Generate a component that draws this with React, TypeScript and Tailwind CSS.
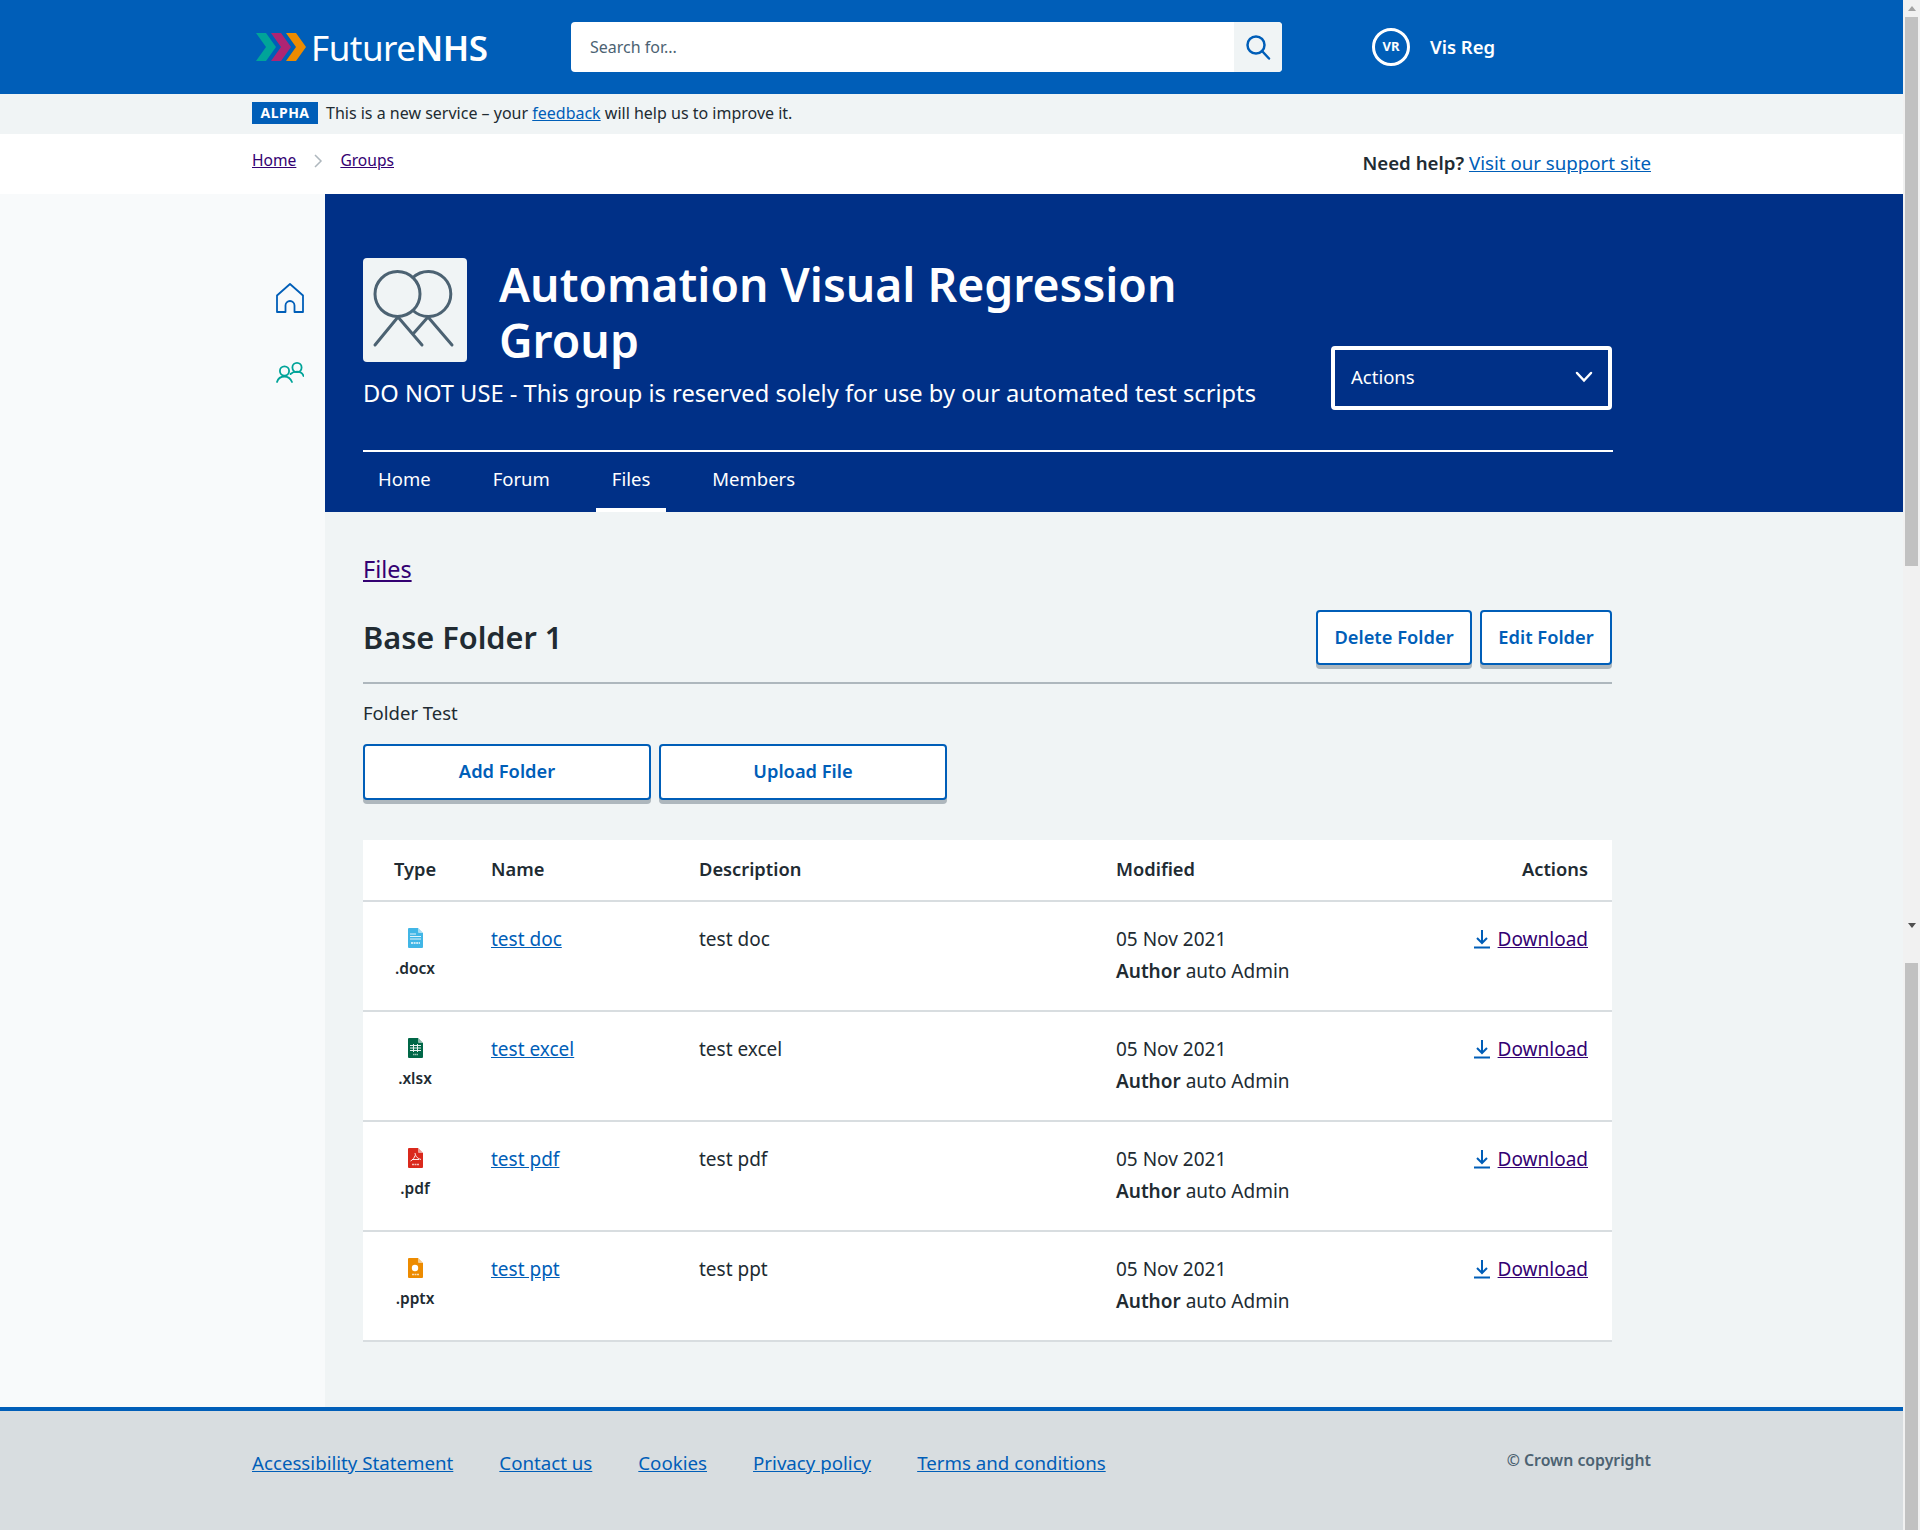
import { ReactNode } from 'react';

const FILES = [
    { name: 'test doc', ext: '.docx', icon: 'doc' },
    { name: 'test excel', ext: '.xlsx', icon: 'xls' },
    { name: 'test pdf', ext: '.pdf', icon: 'pdf' },
    { name: 'test ppt', ext: '.pptx', icon: 'ppt' },
];

const FOOTER_LINKS = ['Accessibility Statement', 'Contact us', 'Cookies', 'Privacy policy', 'Terms and conditions'];

const SHEET = 'M2 0h9l5 5v14a1 1 0 0 1-1 1H2a1 1 0 0 1-1-1V1a1 1 0 0 1 1-1z';

function FileIcon({ type }: { type: string }) {
    const fill: Record<string, string> = { doc: '#41b6e6', xls: '#006747', pdf: '#da291c', ppt: '#ed8b00' };
    return (
        <svg width="17" height="20" viewBox="0 0 17 20" className="block">
            <path d={SHEET} fill={fill[type]} />
            <path d="M11 0l5 5h-4a1 1 0 0 1-1-1z" fill="#fff" opacity="0.55" />
            {type === 'doc' && <path d="M3 6h6M3 8.5h11M3 11h11" stroke="#fff" strokeWidth="1" opacity="0.85" />}
            {type === 'doc' && <path d="M4 15h9" stroke="#fff" strokeWidth="2" strokeDasharray="2 .6" opacity="0.7" />}
            {type === 'xls' && <path d="M3 7.5h11M3 10h11M3 12.5h11M6.5 6v8M10.5 6v8" stroke="#fff" strokeWidth="1" opacity="0.9" />}
            {type === 'xls' && <path d="M6 16.5h5" stroke="#fff" strokeWidth="1.5" strokeDasharray="1.4 .4" opacity="0.6" />}
            {type === 'pdf' && <path d="M8 5c.5 3 1.500 5 6 6.500M8 7.500c-.5 2-2 4.500-4.500 5.500M5 11.500h7" stroke="#fff" strokeWidth="1" fill="none" opacity="0.9" />}
            {type === 'pdf' && <path d="M5 16.500h7" stroke="#fff" strokeWidth="1.500" strokeDasharray="2 .5" opacity="0.7" />}
            {type === 'ppt' && <circle cx="8" cy="10" r="3.200" fill="#fff" />}
            {type === 'ppt' && <path d="M8 10V6.800h3.200a3.200 3.200 0 0 0-3.200-0z" fill={fill.ppt} />}
            {type === 'ppt' && <path d="M5 16.500h7" stroke="#fff" strokeWidth="1.500" strokeDasharray="2 .5" opacity="0.7" />}
        </svg>
    );
}

function OutlineButton({ className, children }: { className: string; children: ReactNode }) {
    return (
        <button className={`flex items-center justify-center rounded-[4px] border-[2px] border-[#005eb8] bg-white pb-[2px] text-[18.300px] font-semibold text-[#005eb8] shadow-[0_4px_0_#aeb7bd] ${className}`}>
            {children}
        </button>
    );
}

export default function App() {
    return (
        <div className="flex h-[1530px] w-[1920px] overflow-hidden bg-[#f0f4f5] font-['Noto_Sans',sans-serif] text-[#212b32]">
            <div className="flex w-[1903px] flex-col">
                {/* Top bar */}
                <header className="flex h-[94px] items-center bg-[#005eb8] pl-[256px]">
                    <div className="flex w-[315px] items-center">
                        <svg width="51" height="28" viewBox="0 0 51 28" className="mr-[4px]">
                            <path d="M0 0h10l10 14-10 14H0l10-14z" fill="#00a499" />
                            <path d="M15 0h10l10 14-10 14H15l10-14z" fill="#ae2573" />
                            <path d="M30 0h10l10 14-10 14H30l10-14z" fill="#ed8b00" />
                        </svg>
                        <span className="text-[35px] leading-none tracking-[-0.5px] text-white">Future<span className="font-semibold">NHS</span></span>
                    </div>
                    <div className="flex h-[50px] w-[711px] overflow-hidden rounded-[4px] bg-white">
                        <span className="flex flex-1 items-center pl-[19px] text-[16px] text-[#4c6272]">Search for...</span>
                        <span className="flex w-[48px] items-center justify-center bg-[#f0f4f5]">
                            <svg width="26" height="26" viewBox="0 0 26 26" fill="none" stroke="#005eb8" strokeWidth="2.500" strokeLinecap="round">
                                <circle cx="11" cy="11" r="8.500" />
                                <path d="M17 17l7 7.500" />
                            </svg>
                        </span>
                    </div>
                    <span className="ml-[90px] flex h-[38px] w-[38px] items-center justify-center rounded-full border-[3px] border-white text-[13px] font-bold text-white">VR</span>
                    <span className="ml-[20px] text-[18.500px] font-semibold text-white">Vis Reg</span>
                </header>

                {/* Alpha banner */}
                <div className="flex h-[40px] items-center pb-[2px] pl-[252px] text-[16px]">
                    <span className="mr-[8px] flex h-[22px] w-[66px] items-center justify-center bg-[#005eb8] pb-[2px] text-[14px] font-bold tracking-[0.5px] text-white">ALPHA</span>
                    <span>This is a new service – your <a className="text-[#005eb8] underline">feedback</a> will help us to improve it.</span>
                </div>

                {/* Breadcrumb */}
                <div className="flex h-[60px] justify-between bg-white px-[252px]">
                    <nav className="flex h-[54px] items-center text-[15.600px] text-[#330072]">
                        <a className="underline">Home</a>
                        <svg width="10" height="14" viewBox="0 0 10 14" fill="none" stroke="#aeb7bd" strokeWidth="1.500" className="mx-[17px]">
                            <path d="M2 1l6 6-6 6" />
                        </svg>
                        <a className="underline">Groups</a>
                    </nav>
                    <p className="mt-[17px] text-[18.700px] leading-[24px]">
                        <span className="font-semibold">Need help?</span> <a className="text-[#005eb8] underline">Visit our support site</a>
                    </p>
                </div>

                <div className="flex h-[1213px]">
                    {/* Side nav */}
                    <aside className="flex w-[325px] flex-col items-end bg-[#f8fafb] pr-[21px] pt-[89px]">
                        <svg width="28" height="30" viewBox="0 0 28 30" fill="none" stroke="#005eb8" strokeWidth="1.800">
                            <path d="M1 29V12.500L14 1l13 11.500V29h-8.500v-6.500a4.500 4.500 0 0 0-9 0V29z" strokeLinejoin="round" />
                        </svg>
                        <svg width="28" height="21" viewBox="0 0 28 21" fill="none" stroke="#00a499" strokeWidth="1.800" strokeLinecap="round" className="mt-[49px]">
                            <circle cx="8.500" cy="9" r="4.600" />
                            <circle cx="21" cy="5.500" r="4.600" />
                            <path d="M1 20c1-3.500 4-5.500 7.500-5.500s6 2 7.500 5.500M14.500 12c2-2 4-2.300 6.500-2.300 3 0 5.500 1.500 6.500 4.300" />
                        </svg>
                    </aside>

                    <main className="flex-1">
                        {/* Group hero */}
                        <section className="h-[318px] bg-[#003087] pl-[38px] pr-[290px] pt-[64px] text-white">
                            <div className="flex h-[194px] justify-between border-b-[2px] border-white">
                                <div>
                                    <div className="flex">
                                        <svg width="104" height="104" viewBox="0 0 104 104" fill="none" stroke="#4c6272" strokeWidth="3" strokeLinecap="round" className="rounded-[4px] bg-[#f0f4f5]">
                                            <circle cx="34.500" cy="36" r="22.500" />
                                            <path d="M50 19.500A22.500 22.500 0 1 1 50 52.500" />
                                            <path d="M35 59L12 87M35 59l24 28M65 59L50 76M65 59l24 28" />
                                        </svg>
                                        <h1 className="-mt-[1px] ml-[32px] w-[720px] text-[46.300px] font-semibold leading-[56px]">Automation Visual Regression Group</h1>
                                    </div>
                                    <p className="mt-[8px] text-[23.700px] leading-[32px]">DO NOT USE - This group is reserved solely for use by our automated test scripts</p>
                                </div>
                                <div className="mr-[1px] mt-[88px] flex h-[64px] w-[281px] items-center justify-between rounded-[4px] border-[4px] border-white pb-[2px] pl-[16px] pr-[15px] text-[18.500px]">
                                    <span>Actions</span>
                                    <svg width="18" height="12" viewBox="0 0 18 12" fill="none" stroke="#fff" strokeWidth="2.500" strokeLinecap="round">
                                        <path d="M2 2l7 7.500L16 2" />
                                    </svg>
                                </div>
                            </div>
                            <nav className="-ml-[1px] flex h-[60px] gap-[30px] text-[18.500px]">
                                {['Home', 'Forum', 'Files', 'Members'].map(tab => (
                                    <a key={tab} className={`flex items-center border-b-[4px] px-[16px] pb-[2px] ${tab === 'Files' ? 'border-white' : 'border-transparent'}`}>{tab}</a>
                                ))}
                            </nav>
                        </section>

                        {/* Files */}
                        <section className="pl-[38px] pr-[291px] pt-[39px]">
                            <a className="block text-[23.400px] leading-[36px] text-[#330072] underline">Files</a>
                            <div className="mt-[19px] flex items-center justify-between border-b-[2px] border-[#aeb7bd] pb-[17px] pt-[4px]">
                                <h2 className="pb-[2px] text-[30.700px] font-semibold leading-[40px]">Base Folder 1</h2>
                                <div className="flex gap-[8px]">
                                    <OutlineButton className="h-[55px] w-[156px]">Delete Folder</OutlineButton>
                                    <OutlineButton className="h-[55px] w-[132px]">Edit Folder</OutlineButton>
                                </div>
                            </div>
                            <p className="mt-[17px] text-[18.500px] leading-[24px]">Folder Test</p>
                            <div className="mt-[19px] flex gap-[8px]">
                                <OutlineButton className="h-[56px] w-[288px]">Add Folder</OutlineButton>
                                <OutlineButton className="h-[56px] w-[288px]">Upload File</OutlineButton>
                            </div>

                            <table className="mt-[40px] w-full table-fixed bg-white text-left text-[19px]">
                                <thead>
                                    <tr className="h-[61px] border-b-[2px] border-[#d8dde0] text-[18.300px]">
                                        <th className="w-[128px] pb-[2px] pl-[31px] font-semibold">Type</th>
                                        <th className="w-[208px] pb-[2px] font-semibold">Name</th>
                                        <th className="w-[417px] pb-[2px] font-semibold">Description</th>
                                        <th className="pb-[2px] font-semibold">Modified</th>
                                        <th className="w-[200px] pb-[2px] pr-[24px] text-right font-semibold">Actions</th>
                                    </tr>
                                </thead>
                                <tbody>
                                    {FILES.map(file => (
                                        <tr key={file.name} className="h-[110px] border-b-[2px] border-[#d8dde0] align-top">
                                            <td>
                                                <div className="flex w-[104px] flex-col items-center pt-[26px]">
                                                    <FileIcon type={file.icon} />
                                                    <span className="mt-[8px] text-[15.500px] font-semibold leading-[24px]">{file.ext}</span>
                                                </div>
                                            </td>
                                            <td className="pt-[21px] leading-[32px]"><a className="text-[#005eb8] underline">{file.name}</a></td>
                                            <td className="pt-[21px] leading-[32px]">{file.name}</td>
                                            <td className="pt-[21px] leading-[32px]">
                                                <div>05 Nov 2021</div>
                                                <div><span className="font-semibold">Author</span> auto Admin</div>
                                            </td>
                                            <td className="pr-[24px] pt-[21px] leading-[32px]">
                                                <div className="flex items-center justify-end">
                                                    <svg width="16" height="20" viewBox="0 0 16 20" fill="none" stroke="#005eb8" strokeWidth="2" className="mr-[8px]">
                                                        <path d="M8 1v13M3 9l5 5 5-5M0 18.500h16" />
                                                    </svg>
                                                    <a className="text-[#330072] underline">Download</a>
                                                </div>
                                            </td>
                                        </tr>
                                    ))}
                                </tbody>
                            </table>
                        </section>
                    </main>
                </div>

                {/* Footer */}
                <footer className="flex flex-1 items-start justify-between border-t-[4px] border-[#005eb8] bg-[#d8dde0] px-[252px] pt-[40px]">
                    <nav className="flex gap-[46px] text-[18.700px] leading-[24px] text-[#005eb8]">
                        {FOOTER_LINKS.map(link => <a key={link} className="underline">{link}</a>)}
                    </nav>
                    <span className="-mt-[3px] text-[15.800px] font-semibold leading-[24px] text-[#4c6272]">© Crown copyright</span>
                </footer>
            </div>

            {/* Scrollbar, stitched in the capture */}
            <div className="flex w-[17px] flex-col items-center bg-[#f1f1f1]">
                <div className="mt-[6px] h-0 w-0 border-x-[4px] border-b-[5px] border-x-transparent border-b-[#a3a3a3]" />
                <div className="mt-[6px] h-[549px] w-[13px] bg-[#c1c1c1]" />
                <div className="mt-[357px] h-0 w-0 border-x-[4px] border-t-[5px] border-x-transparent border-t-[#505050]" />
                <div className="mt-[35px] w-[13px] flex-1 bg-[#c1c1c1]" />
            </div>
        </div>
    );
}
